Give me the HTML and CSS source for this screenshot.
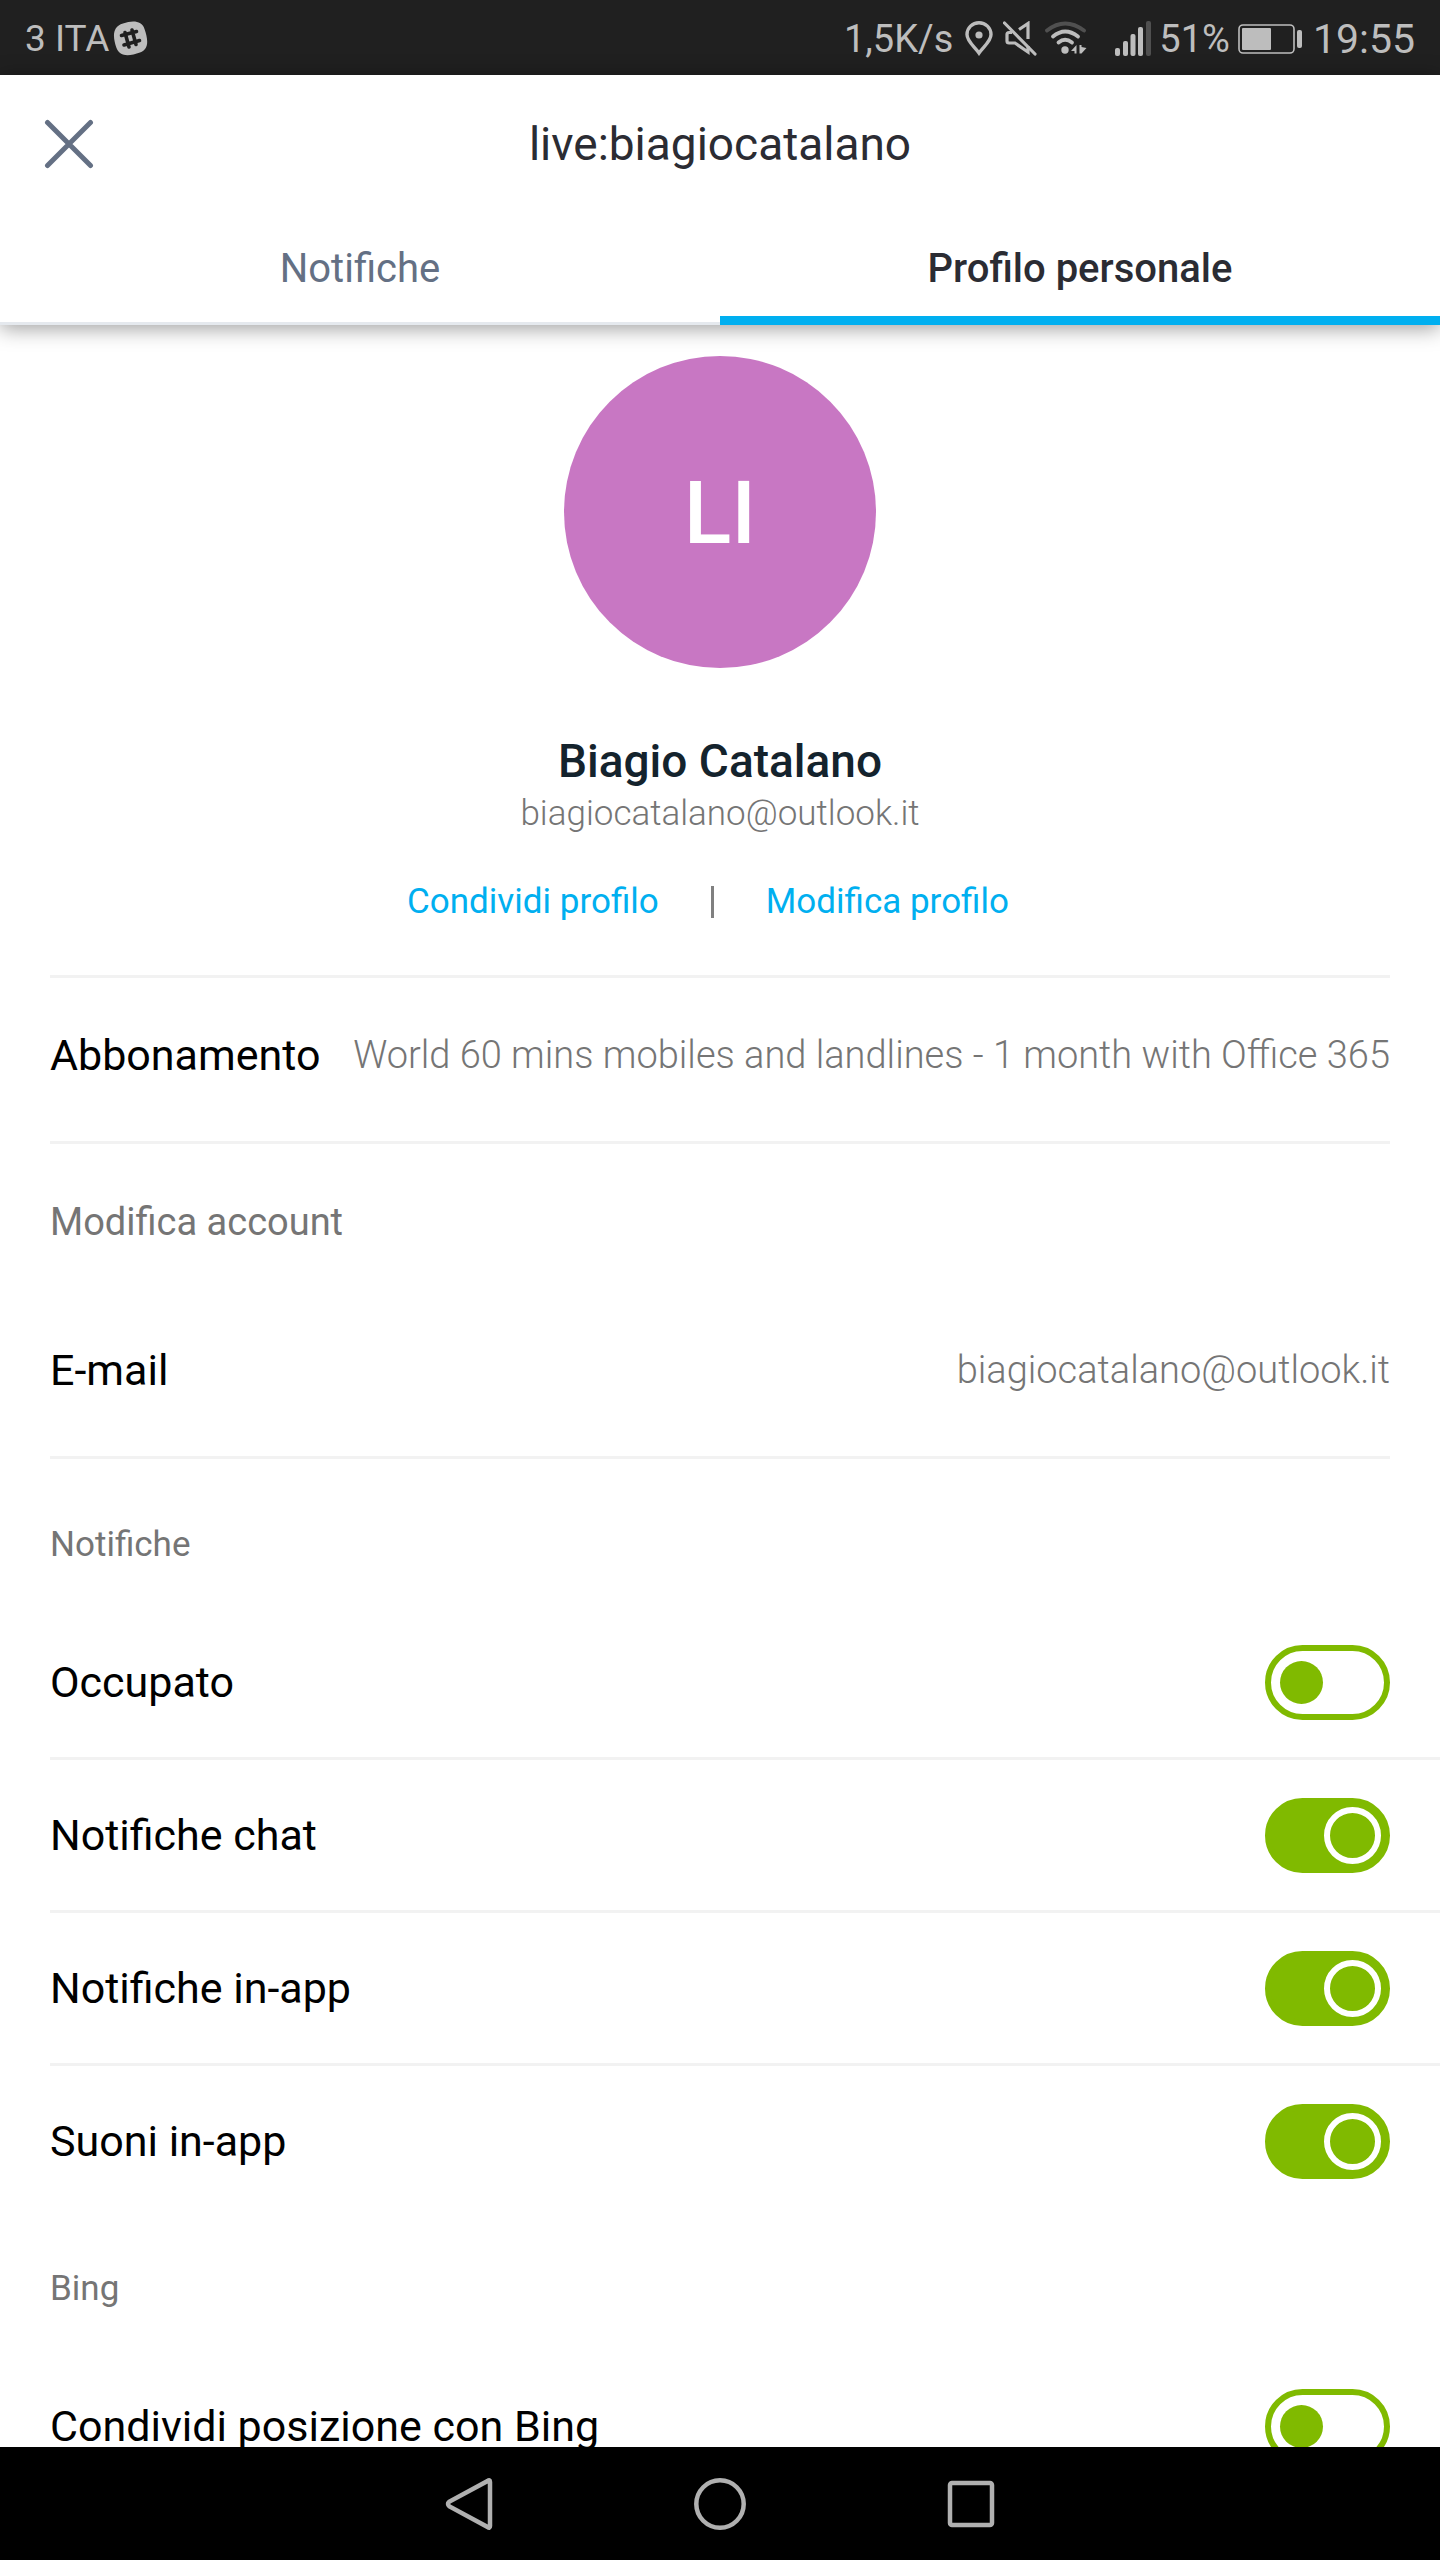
FILE: index.html
```html
<!DOCTYPE html>
<html lang="it">
<head>
  <meta charset="UTF-8" />
  <meta name="viewport" content="width=device-width, initial-scale=1.0"/>
  <title>Profilo personale</title>
  <link rel="stylesheet" href="styles.css">
</head>
<body>
  <div class="status-bar">
    <div class="status-left">
      <span>3 ITA</span>
      <svg width="35" height="35" viewBox="0 0 35 35">
        <path d="M10 2.6C20-1 29 0 31.500 8C35 18 36.500 28 27 31.500C17 35 7 36.500 3.500 27C0 17-1.500 6 10 2.600Z" fill="#bdbdbd"/>
        <path d="M12 11.500L16 26M19 9L23 23.500M8.500 14.500L23.500 10.500M11 24L26.500 19.500" stroke="#202020" stroke-width="3.600" stroke-linecap="round"/>
      </svg>
    </div>
    <div class="status-right">
      <span>1,5K/s</span>
      <svg class="pin" width="28" height="35" viewBox="0 0 28 35" fill="none">
        <path d="M14 32C10 26 2 20.500 2 13.500A12 11.800 0 0 1 26 13.500C26 20.500 18 26 14 32Z" stroke="#bdbdbd" stroke-width="3.400"/>
        <circle cx="14" cy="14" r="3.600" fill="#bdbdbd"/>
      </svg>
      <svg width="34" height="35" viewBox="0 0 34 35" fill="none" stroke="#bdbdbd" stroke-width="3.200">
        <path d="M1.500 2L32 33" stroke-linecap="round"/>
        <path d="M16 8.500L25 2.500V18M9 11.500H6Q4 11.500 4 13.500V20Q4 22 6 22H12L25 31V25"/>
      </svg>
      <svg class="wifi" width="42" height="35" viewBox="0 0 42 35" fill="none" stroke="#bdbdbd" stroke-width="3.800" stroke-linecap="round">
        <path d="M2 9.500Q20-4.500 39 9.500" stroke="#505050"/>
        <path d="M8 15.500Q20 5.500 33 15.500M13.500 21.500Q20 16 27 21.500"/>
        <circle cx="20" cy="29" r="3.700" fill="#bdbdbd" stroke="none"/>
        <path d="M26 30L31.500 24V32.500H29.500V30ZM36.500 24V26L41.500 27L36.500 32.500H34.500V24Z" fill="#bdbdbd" stroke="none"/>
      </svg>
      <svg width="36" height="35" viewBox="0 0 36 35" fill="#bdbdbd">
        <rect x="0" y="27" width="5" height="8" rx="2"/>
        <rect x="8" y="20" width="5" height="15" rx="2"/>
        <rect x="15.500" y="13" width="5" height="22" rx="2"/>
        <rect x="23" y="6" width="5" height="29" rx="2"/>
        <rect x="31" y="0" width="5" height="35" rx="2" fill="#505050"/>
      </svg>
      <span>51%</span>
      <svg class="battery" width="64" height="30" viewBox="0 0 64 30">
        <rect x="1" y="1" width="55" height="28" rx="4" fill="none" stroke="#bdbdbd" stroke-width="1.600"/>
        <rect x="4" y="4" width="29" height="22" rx="1" fill="#bdbdbd"/>
        <rect x="59" y="6" width="5" height="18" rx="2" fill="#bdbdbd"/>
      </svg>
      <span class="clock">19:55</span>
    </div>
  </div>

  <header class="header">
    <div class="title-bar">
      <button class="close-btn" aria-label="Chiudi">
        <svg width="50" height="50" viewBox="0 0 50 50">
          <path d="M3.500 3.500L46.500 46.500M46.500 3.500L3.500 46.500" stroke="#647084" stroke-width="5" stroke-linecap="round"/>
        </svg>
      </button>
      <h1>live:biagiocatalano</h1>
    </div>
    <nav class="tabs">
      <button class="tab">Notifiche</button>
      <button class="tab active">Profilo personale</button>
    </nav>
  </header>

  <main class="content">
    <section class="profile">
      <div class="avatar">LI</div>
      <h2>Biagio Catalano</h2>
      <p class="email">biagiocatalano@outlook.it</p>
      <div class="profile-links">
        <a href="#">Condividi profilo</a>
        <span class="separator"></span>
        <a href="#">Modifica profilo</a>
      </div>
    </section>

    <div class="info-row">
      <span>Abbonamento</span>
      <span class="value">World 60 mins mobiles and landlines - 1 month with Office 365</span>
    </div>

    <h3 class="account-title">Modifica account</h3>
    <div class="info-row">
      <span>E-mail</span>
      <span class="value">biagiocatalano@outlook.it</span>
    </div>

    <h3 class="notify-title">Notifiche</h3>
    <label class="switch-row">Occupato <input type="checkbox" class="switch"></label>
    <label class="switch-row">Notifiche chat <input type="checkbox" class="switch" checked></label>
    <label class="switch-row">Notifiche in-app <input type="checkbox" class="switch" checked></label>
    <label class="switch-row last">Suoni in-app <input type="checkbox" class="switch" checked></label>

    <h3 class="bing-title">Bing</h3>
    <label class="switch-row last">Condividi posizione con Bing <input type="checkbox" class="switch"></label>
  </main>

  <nav class="nav-bar">
    <button aria-label="Indietro">
      <svg width="56" height="56" viewBox="0 0 56 56"><path d="M46.500 5Q49 3 49 6V50Q49 53 46.500 51L8.500 30.500Q5.500 28 8.500 25.500Z"/></svg>
    </button>
    <button aria-label="Home">
      <svg width="56" height="56" viewBox="0 0 56 56"><circle cx="28" cy="28" r="23.700"/></svg>
    </button>
    <button aria-label="Recenti">
      <svg width="56" height="56" viewBox="0 0 56 56"><rect x="7" y="7" width="42" height="42" rx="2"/></svg>
    </button>
  </nav>
</body>
</html>
```
FILE: styles.css
```css
*, *::before {
  box-sizing: border-box;
}

body {
  margin: 0;
  height: 100vh;
  display: flex;
  flex-direction: column;
  overflow: hidden;
  background-color: #fff;
  font-family: Roboto, sans-serif;
  color: #000;
}

h1, h2, h3, p {
  margin: 0;
  font-weight: 400;
}

button {
  padding: 0;
  border: none;
  background: none;
  font-family: inherit;
  cursor: pointer;
}

svg {
  display: block;
  flex: none;
}

/* status bar */
.status-bar {
  flex: none;
  display: flex;
  justify-content: space-between;
  height: 75px;
  padding: 2px 25px 0;
  background-color: #202020;
  color: #bdbdbd;
  font-size: 38px;
}

.status-left,
.status-right {
  display: flex;
  align-items: center;
  gap: 8px;
}

.status-left {
  gap: 4px;
  font-size: 37px;
}

.pin {
  margin: 0 2px 0 4px;
}

.wifi {
  margin-right: 20px;
}

.battery {
  margin-right: 3px;
}

.clock {
  font-size: 41px;
}

/* header */
.header {
  flex: none;
  position: relative;
  background-color: #fff;
  box-shadow: 0 3px 20px rgba(0, 0, 0, 0.4);
}

.title-bar {
  display: grid;
  grid-template-columns: 50px 1fr 50px;
  align-items: center;
  height: 138px;
  padding: 0 44px;
}

.title-bar h1 {
  font-size: 46px;
  text-align: center;
  color: #2b2c33;
}

.tabs {
  display: flex;
}

.tab {
  flex: 1;
  height: 112px;
  padding-bottom: 2px;
  font-size: 40px;
  color: #647084;
  box-shadow: inset 0 -3px #e5e9ee;
}

.tab.active {
  font-weight: 500;
  color: #2b2c33;
  box-shadow: inset 0 -9px #00aff0;
}

/* page content */
.content {
  flex: 1;
  min-height: 0;
  padding-left: 50px;
  overflow-x: hidden;
  overflow-y: auto;
  scrollbar-width: none;
}

.profile {
  display: flex;
  flex-direction: column;
  align-items: center;
  margin-right: 50px;
  padding: 31px 0 48px;
  border-bottom: 3px solid #f2f2f2;
}

.avatar {
  display: flex;
  align-items: center;
  justify-content: center;
  width: 312px;
  height: 312px;
  margin-bottom: 66px;
  border-radius: 50%;
  background-color: #c877c3;
  color: #fff;
  font-size: 88px;
  font-weight: 500;
}

.profile h2 {
  font-size: 46px;
  font-weight: 500;
  line-height: 55px;
  color: #14232d;
}

.email {
  font-size: 35px;
  font-weight: 300;
  line-height: 50px;
  color: #757575;
}

.profile-links {
  display: flex;
  align-items: center;
  gap: 52px;
  margin-top: 38px;
  padding-right: 24px;
  font-size: 35px;
  line-height: 50px;
}

.profile-links a {
  color: #00aff0;
  text-decoration: none;
}

.separator {
  width: 3px;
  height: 32px;
  background-color: #808080;
}

.info-row {
  display: flex;
  align-items: center;
  justify-content: space-between;
  height: 166px;
  margin-right: 50px;
  padding-bottom: 10px;
  border-bottom: 3px solid #f2f2f2;
  font-size: 43px;
}

.info-row .value {
  font-size: 38px;
  font-weight: 300;
  color: #757575;
}

h3 {
  font-size: 35px;
  line-height: 124px;
  color: #757575;
}

.account-title {
  margin: 16px 0 9px;
  font-size: 38px;
}

.notify-title {
  margin-top: 24px;
}

.bing-title {
  margin-top: 8px;
}

.switch-row {
  display: flex;
  align-items: center;
  justify-content: space-between;
  height: 153px;
  padding-right: 50px;
  border-bottom: 3px solid #f2f2f2;
  font-size: 43px;
  cursor: pointer;
}

.switch-row.last {
  border-color: transparent;
}

.switch {
  appearance: none;
  display: flex;
  align-items: center;
  width: 125px;
  height: 75px;
  margin: 0;
  padding-left: 9px;
  border: 6px solid #80ba00;
  border-radius: 38px;
  cursor: pointer;
}

.switch::before {
  content: "";
  width: 43px;
  height: 43px;
  border-radius: 50%;
  background-color: #80ba00;
}

.switch:checked {
  justify-content: flex-end;
  padding: 0 3px 0 0;
  background-color: #80ba00;
}

.switch:checked::before {
  width: 57px;
  height: 57px;
  border: 6px solid #fff;
}

/* android navigation */
.nav-bar {
  flex: none;
  position: relative;
  display: flex;
  align-items: center;
  justify-content: center;
  gap: 195px;
  height: 113px;
  background-color: #000;
}

.nav-bar svg {
  fill: none;
  stroke: #b0b0b0;
  stroke-width: 4.500;
}
```
